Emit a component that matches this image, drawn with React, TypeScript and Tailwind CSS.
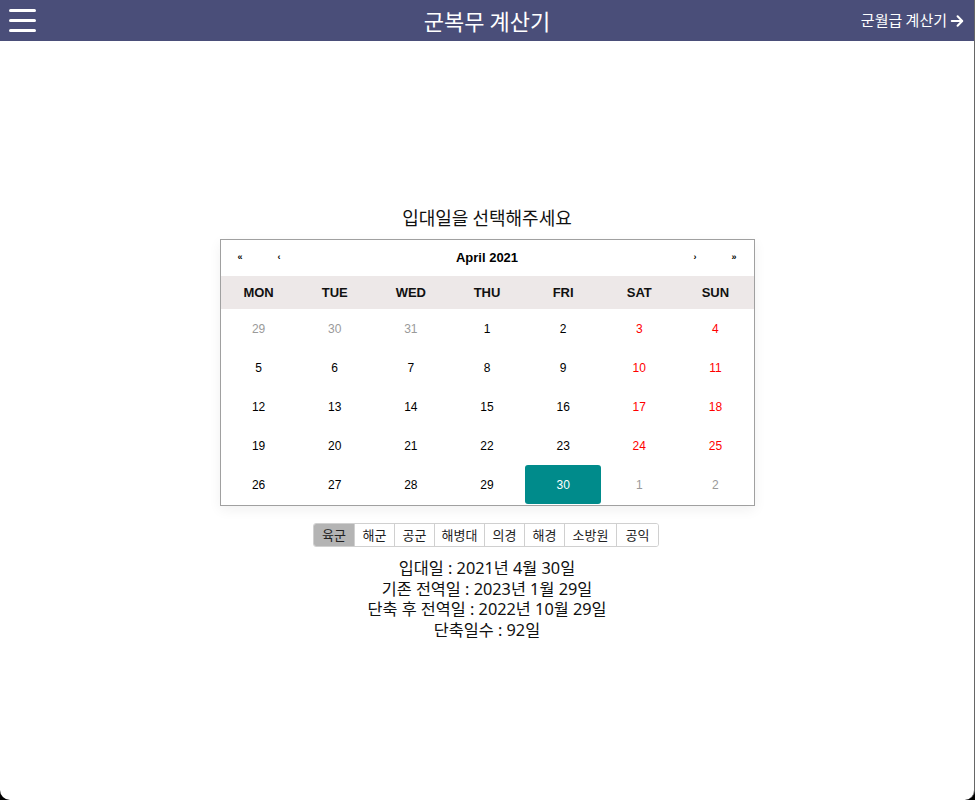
import React from "react";

const weeks: { d: number; t: "o" | "n" | "w" | "s" }[][] = [
  [
    { d: 29, t: "o" }, { d: 30, t: "o" }, { d: 31, t: "o" }, { d: 1, t: "n" }, { d: 2, t: "n" }, { d: 3, t: "w" }, { d: 4, t: "w" },
  ],
  [
    { d: 5, t: "n" }, { d: 6, t: "n" }, { d: 7, t: "n" }, { d: 8, t: "n" }, { d: 9, t: "n" }, { d: 10, t: "w" }, { d: 11, t: "w" },
  ],
  [
    { d: 12, t: "n" }, { d: 13, t: "n" }, { d: 14, t: "n" }, { d: 15, t: "n" }, { d: 16, t: "n" }, { d: 17, t: "w" }, { d: 18, t: "w" },
  ],
  [
    { d: 19, t: "n" }, { d: 20, t: "n" }, { d: 21, t: "n" }, { d: 22, t: "n" }, { d: 23, t: "n" }, { d: 24, t: "w" }, { d: 25, t: "w" },
  ],
  [
    { d: 26, t: "n" }, { d: 27, t: "n" }, { d: 28, t: "n" }, { d: 29, t: "n" }, { d: 30, t: "s" }, { d: 1, t: "o" }, { d: 2, t: "o" },
  ],
];

const days = ["MON", "TUE", "WED", "THU", "FRI", "SAT", "SUN"];
const tabs = [
  { l: "육군", w: "w-[40px]" },
  { l: "해군", w: "w-[40px]" },
  { l: "공군", w: "w-[40px]" },
  { l: "해병대", w: "w-[50px]" },
  { l: "의경", w: "w-[40px]" },
  { l: "해경", w: "w-[40px]" },
  { l: "소방원", w: "w-[52px]" },
  { l: "공익", w: "w-[42px]" },
];

export default function App() {
  return (
    <div className="h-[800px] w-[975px] bg-black overflow-hidden">
      <div className="h-[800px] w-[975px] bg-white rounded-b-[10px] border-r border-[#666] flex flex-col [font-family:'Noto_Sans_CJK_KR','Noto_Sans',sans-serif]">
        <header className="h-[41px] bg-[#4a4e79] flex items-center justify-between px-[9px] relative">
          <div className="flex flex-col gap-[7px]">
            <div className="w-[27px] h-[3px] bg-white rounded-full" />
            <div className="w-[27px] h-[3px] bg-white rounded-full" />
            <div className="w-[27px] h-[3px] bg-white rounded-full" />
          </div>
          <div className="absolute left-0 right-0 text-center text-white text-[22px] leading-[41px] pointer-events-none">
            군복무 계산기
          </div>
          <div className="flex items-center text-white text-[15px] gap-[3px] mr-[1px]">
            <span>군월급 계산기</span>
            <svg width="14" height="14" viewBox="0 0 24 24" fill="none" stroke="white" strokeWidth="3.5" strokeLinecap="round" strokeLinejoin="round">
              <path d="M3 12h17" />
              <path d="M13 4l8 8-8 8" />
            </svg>
          </div>
        </header>

        <div className="flex flex-col items-center">
          <div className="mt-[163px] text-[18px] leading-[26px] text-[#111]">입대일을 선택해주세요</div>

          <div className="mt-[9px] w-[535px] border border-[#a0a0a0] bg-white shadow-[0_4px_12px_rgba(0,0,0,0.06)] [font-family:'Liberation_Sans',Arial,sans-serif]">
            <div className="h-[36px] flex items-center text-black">
              <div className="w-[39px] text-center text-[9px] font-bold">«</div>
              <div className="w-[39px] text-center text-[9px] font-bold">‹</div>
              <div className="flex-1 text-center text-[13px] font-bold">April 2021</div>
              <div className="w-[39px] text-center text-[9px] font-bold">›</div>
              <div className="w-[39px] text-center text-[9px] font-bold">»</div>
            </div>
            <div className="h-[33px] bg-[#ede8e8] grid grid-cols-7 items-center">
              {days.map((d) => (
                <div key={d} className="text-center text-[13px] font-bold text-[#111]">
                  {d}
                </div>
              ))}
            </div>
            <div className="grid grid-cols-7">
              {weeks.flat().map((c, i) => (
                <div
                  key={i}
                  className={
                    "h-[39px] flex items-center justify-center text-[12px] " +
                    (c.t === "s"
                      ? "bg-[#008b8b] text-white rounded-[3px] mb-[1px]"
                      : c.t === "o"
                      ? "text-[#9a9a9a]"
                      : c.t === "w"
                      ? "text-[#ff0000]"
                      : "text-black")
                  }
                >
                  {c.d}
                </div>
              ))}
            </div>
          </div>

          <div className="mt-[17px] flex h-[24px] border border-[#d0d0d0] rounded-[3px] overflow-hidden text-[13px] text-[#222] -ml-[2px]">
            {tabs.map((t, i) => (
              <div
                key={t.l}
                className={
                  t.w +
                  " flex items-center justify-center " +
                  (i > 0 ? "border-l border-[#d0d0d0] " : "") +
                  (i === 0 ? "bg-[#b4b4b4]" : "bg-white")
                }
              >
                {t.l}
              </div>
            ))}
          </div>

          <div className="mt-[11px] text-center text-[16.3px] leading-[20.5px] text-[#111] [font-family:'Noto_Sans','Noto_Sans_CJK_KR',sans-serif]">
            <div>입대일 : 2021년 4월 30일</div>
            <div>기존 전역일 : 2023년 1월 29일</div>
            <div>단축 후 전역일 : 2022년 10월 29일</div>
            <div>단축일수 : 92일</div>
          </div>
        </div>
      </div>
    </div>
  );
}
